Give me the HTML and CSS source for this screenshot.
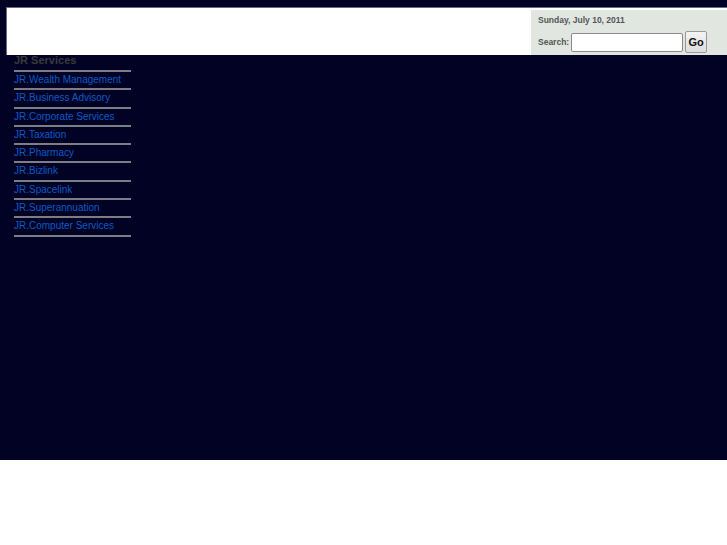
FILE: index.html
```html
<!DOCTYPE html>
<html>
<head>
<meta charset="utf-8">
<link rel="stylesheet" href="styles.css">
</head>
<body>
<div class="page">
  <div class="header">
    <div class="logo-area"></div>
    <div class="tools">
      <div class="date">Sunday, July 10, 2011</div>
      <form class="search">
        <label class="search-label">Search:</label>
        <input class="search-input" type="text">
        <button class="go" type="button">Go</button>
      </form>
    </div>
  </div>
  <div class="menu">
    <div class="menu-title">JR Services</div>
    <ul class="menu-list">
      <li><a href="#">JR.Wealth Management</a></li>
      <li><a href="#">JR.Business Advisory</a></li>
      <li><a href="#">JR.Corporate Services</a></li>
      <li><a href="#">JR.Taxation</a></li>
      <li><a href="#">JR.Pharmacy</a></li>
      <li><a href="#">JR.Bizlink</a></li>
      <li><a href="#">JR.Spacelink</a></li>
      <li><a href="#">JR.Superannuation</a></li>
      <li><a href="#">JR.Computer Services</a></li>
    </ul>
  </div>
</div>
</body>
</html>
```
FILE: styles.css
```css
html { background: #ffffff; }
body { margin: 0; font-family: "Liberation Sans", Arial, sans-serif; }
.page {
  background: #020224;
  height: 460px;
  padding-top: 7px;
  box-sizing: border-box;
}
.header {
  margin-left: 6px;
  height: 48px;
  background: #ffffff;
  border-top: 1px solid #6a6a80;
  border-left: 1px solid #6a6a80;
  box-sizing: border-box;
  display: flex;
  justify-content: space-between;
}
.tools {
  width: 196px;
  margin-top: 2px;
  background: #e1e6e1;
  padding: 5px 0 0 7px;
  box-sizing: border-box;
}
.date {
  font-size: 8.5px;
  font-weight: bold;
  color: #555;
  height: 16px;
}
.search { display: flex; align-items: center; margin: 0; }
.search-label { font-size: 8.5px; font-weight: bold; color: #555; margin-right: 2px; }
.search-input {
  width: 112px; height: 19px; box-sizing: border-box;
  border: 1px solid #8a8a8a; border-radius: 2px; background: #fff; padding: 0; margin: 0;
}
.go {
  margin-left: 2px;
  width: 22px; height: 22px; padding: 0;
  font-family: "Liberation Sans", Arial, sans-serif;
  font-size: 11px; font-weight: bold; color: #111;
  background: linear-gradient(#f4f4f4, #dcdcdc);
  border: 1px solid #999; border-radius: 2px;
}
.menu { margin-left: 14px; width: 117px; }
.menu-title {
  font-size: 11px; font-weight: bold; color: #3a3a3a;
  height: 15px; line-height: 11px;
}
.menu-list { list-style: none; margin: 0; padding: 0; border-top: 2px solid #7d7d86; }
.menu-list li {
  height: 16.3px; border-bottom: 2px solid #7d7d86;
  font-size: 10px; line-height: 16px;
}
.menu-list a { color: #0a5ac8; text-decoration: none; }
```
